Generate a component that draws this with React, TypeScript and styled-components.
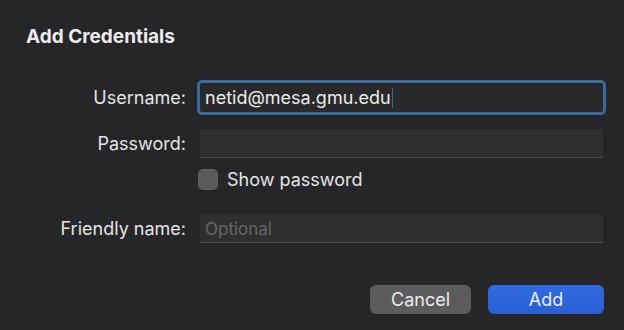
import React from 'react';
import styled, { createGlobalStyle } from 'styled-components';

const Global = createGlobalStyle`
  html, body {
    margin: 0;
    padding: 0;
    background: #262628;
  }
  * {
    box-sizing: border-box;
  }
`;

export default function App() {
  return (
    <>
      <Global />
      <Dialog>
        <Title>Add Credentials</Title>
        <Form>
          <Row $top={33}>
            <Label>Username:</Label>
            <Field $focused>
              netid@mesa.gmu.edu
              <Caret />
            </Field>
          </Row>
          <Row $top={17}>
            <Label>Password:</Label>
            <Field />
          </Row>
          <Row $top={11}>
            <span />
            <CheckLine>
              <Checkbox />
              <span>Show password</span>
            </CheckLine>
          </Row>
          <Row $top={24}>
            <Label>Friendly name:</Label>
            <Field>
              <Placeholder>Optional</Placeholder>
            </Field>
          </Row>
        </Form>
        <Buttons>
          <Button>Cancel</Button>
          <Button $primary>Add</Button>
        </Buttons>
      </Dialog>
    </>
  );
}

const Dialog = styled.div`
  width: 624px;
  height: 330px;
  padding: 24px 20px 0 26px;
  background: #262628;
  font-family: Inter, 'Liberation Sans', sans-serif;
  color: #dfdfdf;
  display: flex;
  flex-direction: column;
`;

const Title = styled.div`
  font-size: 19px;
  font-weight: 700;
  line-height: 26px;
  color: #ececec;
`;

const Form = styled.div`
  display: flex;
  flex-direction: column;
`;

const Row = styled.div<{ $top: number }>`
  display: grid;
  grid-template-columns: 160px 403px;
  column-gap: 14px;
  align-items: center;
  margin-top: ${(p) => p.$top}px;
`;

const Label = styled.div`
  text-align: right;
  font-size: 18px;
  color: #e4e4e4;
`;

const Field = styled.div<{ $focused?: boolean }>`
  height: 29px;
  display: flex;
  align-items: center;
  padding: 0 5px;
  font-size: 18px;
  color: #ececec;
  background: #2f2f31;
  border-top: 1px solid #2c2c2e;
  border-bottom: 1px solid #4a4a4c;
  ${(p) =>
    p.$focused &&
    `
    background: #29292b;
    border: none;
    border-radius: 2px;
    outline: 3.5px solid #3a6b9c;
    outline-offset: 0;
  `}
`;

const Caret = styled.span`
  display: inline-block;
  width: 1px;
  height: 20px;
  margin-left: 1px;
  background: #3a6b9c;
`;

const Placeholder = styled.span`
  color: #666668;
  font-size: 17px;
`;

const CheckLine = styled.div`
  display: flex;
  align-items: center;
  gap: 9px;
  font-size: 18px;
  color: #e4e4e4;
  margin-left: -2px;
`;

const Checkbox = styled.span`
  width: 20px;
  height: 21px;
  border-radius: 5px;
  background: #5a5a5c;
  border: 1px solid #636365;
`;

const Buttons = styled.div`
  display: flex;
  justify-content: flex-end;
  gap: 17px;
  margin-top: 42px;
`;

const Button = styled.div<{ $primary?: boolean }>`
  width: ${(p) => (p.$primary ? 116 : 101)}px;
  height: 29px;
  border-radius: 6px;
  display: flex;
  align-items: center;
  justify-content: center;
  font-size: 18px;
  color: #ececec;
  background: ${(p) =>
    p.$primary ? 'linear-gradient(#2f6be0, #2a5fd2)' : '#5c5c5e'};
`;
